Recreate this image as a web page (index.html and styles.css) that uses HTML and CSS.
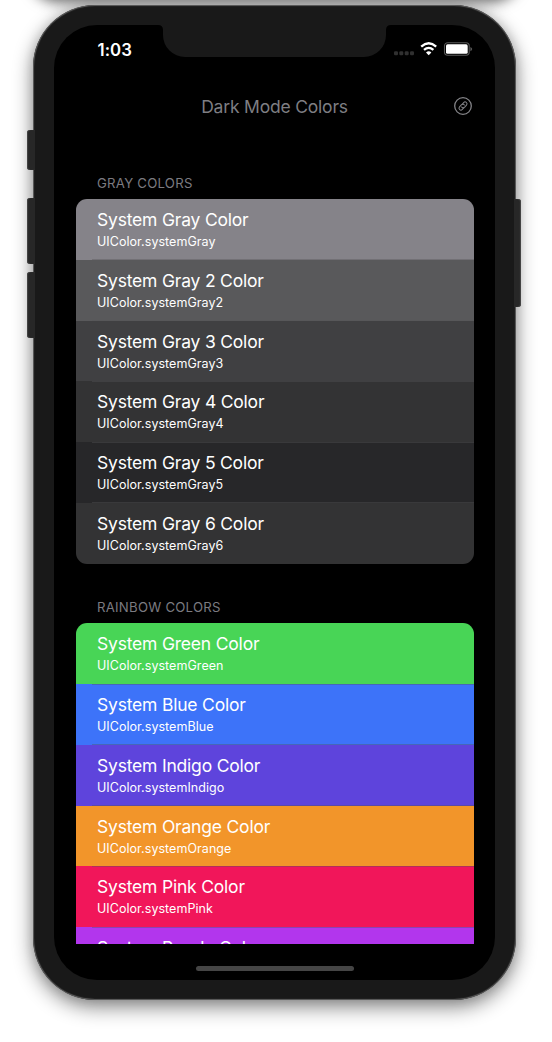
FILE: index.html
```
<!DOCTYPE html>
<html lang="en">
<head>
<meta charset="utf-8">
<title>Dark Mode Colors</title>
<link rel="stylesheet" href="styles.css">
</head>
<body>
<div class="upper-shadow"></div>
<div class="phone">
  <span class="button mute"></span>
  <span class="button volume-up"></span>
  <span class="button volume-down"></span>
  <span class="button power"></span>
  <svg class="notch" width="233" height="33" viewBox="0 0 233 33"><path d="M0 0Q5 0 5 5V10A22 22 0 0 0 27 32H206A22 22 0 0 0 228 10V5Q228 0 233 0Z"/></svg>
  <div class="screen">
    <div class="status">
      <span class="time">1:03</span>
      <svg class="indicators" width="80" height="16" viewBox="0 0 80 16">
        <g fill="#303030"><rect x="1" y="10.3" width="4" height="4" rx="1.3"/><rect x="6.3" y="10.3" width="4" height="4" rx="1.3"/><rect x="11.7" y="10.3" width="4" height="4" rx="1.3"/><rect x="17" y="10.3" width="4" height="4" rx="1.3"/></g>
        <g fill="none" stroke="#fff" stroke-width="2.3"><path d="M28.2 5.6Q35.7 -1 43.2 5.6"/><path d="M31 8.8Q35.7 4.9 40.4 8.8"/></g>
        <path fill="#fff" d="M35.7 14.2L33 11.4Q35.7 9.2 38.4 11.4Z"/>
        <rect x="51.5" y="1.8" width="24.7" height="12.5" rx="3.2" fill="none" stroke="#595959" stroke-width="1.1"/>
        <rect x="53" y="3.3" width="21.7" height="9.5" rx="1.6" fill="#fff"/>
        <path d="M77.4 5.9Q79.2 6.6 79.2 8.1T77.4 10.2Z" fill="#595959"/>
      </svg>
    </div>
    <header class="nav">
      <h1>Dark Mode Colors</h1>
      <svg class="link" width="20" height="20" viewBox="0 0 20 20" fill="none" stroke="#838387">
        <circle cx="10" cy="10" r="8.3" stroke-width="1.3"/>
        <g transform="rotate(-48 10 10)" stroke-width="1"><path d="M9.4 11.8H7A1.9 1.9 0 0 1 7 8H10A1.9 1.9 0 0 1 11.5 10.8"/><path d="M10.6 8.2H13A1.9 1.9 0 0 1 13 12H10A1.9 1.9 0 0 1 8.5 9.2"/></g>
      </svg>
    </header>
    <main class="content">
      <section>
        <h2>GRAY COLORS</h2>
        <div class="list">
          <div class="row gray"><b>System Gray Color</b><small>UIColor.systemGray</small></div>
          <div class="row gray2"><b>System Gray 2 Color</b><small>UIColor.systemGray2</small></div>
          <div class="row gray3"><b>System Gray 3 Color</b><small>UIColor.systemGray3</small></div>
          <div class="row gray4"><b>System Gray 4 Color</b><small>UIColor.systemGray4</small></div>
          <div class="row gray5"><b>System Gray 5 Color</b><small>UIColor.systemGray5</small></div>
          <div class="row gray6"><b>System Gray 6 Color</b><small>UIColor.systemGray6</small></div>
        </div>
      </section>
      <section>
        <h2>RAINBOW COLORS</h2>
        <div class="list">
          <div class="row green"><b>System Green Color</b><small>UIColor.systemGreen</small></div>
          <div class="row blue"><b>System Blue Color</b><small>UIColor.systemBlue</small></div>
          <div class="row indigo"><b>System Indigo Color</b><small>UIColor.systemIndigo</small></div>
          <div class="row orange"><b>System Orange Color</b><small>UIColor.systemOrange</small></div>
          <div class="row pink"><b>System Pink Color</b><small>UIColor.systemPink</small></div>
          <div class="row purple"><b>System Purple Color</b></div>
        </div>
      </section>
    </main>
    <div class="home"></div>
  </div>
</div>
</body>
</html>
```
FILE: styles.css
```
* { box-sizing: border-box; }
html { overflow: hidden; }
body { margin: 0; width: 552px; height: 1042px; overflow: hidden; background: #fff; position: relative; display: flow-root; font-family: Inter, "Liberation Sans", sans-serif; }
.upper-shadow { position: absolute; left: 30px; top: -61px; width: 490px; height: 56px; border-radius: 40px; box-shadow: 0 7px 14px rgba(0,0,0,.62); }
.phone { position: relative; margin: 5px 0 0 33px; width: 482.5px; height: 995px; padding: 20px 20.5px 20px 21px; background: #191919; border-radius: 62px; box-shadow: inset 0 0 1px 1px #606060, 0 7px 20px rgba(0,0,0,.48), 0 0 12px rgba(0,0,0,.12); }
.button { position: absolute; left: -6px; width: 8px; background: #272727; border-radius: 3px 0 0 3px; box-shadow: inset 1px 0 1px #484848; }
.mute { top: 125px; height: 40px; }
.volume-up { top: 192.5px; height: 66.5px; }
.volume-down { top: 267px; height: 66px; }
.power { left: 481px; top: 194px; height: 108px; width: 7px; border-radius: 0 3px 3px 0; box-shadow: inset -1px 0 1px #484848; }
.notch { position: absolute; left: 125px; top: 20px; fill: #191919; z-index: 1; }
.screen { height: 955px; background: #000; border-radius: 43px; display: flex; flex-direction: column; overflow: hidden; }
.status { height: 48px; flex: none; padding: 16px 22px 0 43.5px; display: flex; justify-content: space-between; align-items: flex-start; color: #fff; }
.time { padding-top: .6px; font-size: 16.8px; font-weight: 600; line-height: 17px; letter-spacing: .05px; }
.nav { height: 68px; flex: none; padding-right: 22px; display: grid; grid-template-columns: 42px 1fr 20px; align-items: start; }
.nav h1 { grid-column: 2; margin: 0; padding-top: 24px; font-size: 17.5px; line-height: 20px; font-weight: 400; letter-spacing: -.2px; color: #7e7e83; text-align: center; white-space: nowrap; }
.link { margin-top: 22.5px; }
.content { height: 802.5px; flex: none; padding: 32px 21.5px 0; overflow: hidden; }
h2 { margin: 0 0 5px; padding: 0 21.5px; height: 21px; font-size: 13.2px; line-height: 21px; font-weight: 400; letter-spacing: .24px; color: #7b7b80; }
section + section { margin-top: 33.9px; }
.list { border-radius: 11px; overflow: hidden; color: #fff; }
.row { height: 60.75px; padding: 11px 21.5px 0; position: relative; white-space: nowrap; }
.row + .row::before { content: ""; position: absolute; left: 16px; right: 0; top: -.5px; height: 1px; background: rgba(84,84,88,.4); }
.row b { display: block; font-size: 17.5px; line-height: 20px; font-weight: 400; letter-spacing: -.2px; }
.row small { display: block; margin-top: 4px; font-size: 12.5px; line-height: 15px; letter-spacing: .05px; }
.gray { background: #858389; }
.gray2 { background: #59595b; }
.gray3 { background: #404042; }
.gray4 { background: #333334; }
.gray5 { background: #272729; }
.gray6 { background: #333334; }
.green { background: #48d556; }
.blue { background: #3d73f9; }
.indigo { background: #5e44dc; }
.orange { background: #f2952a; }
.pink { background: #f1165a; }
.purple { background: #b236ed; }
.home { width: 158px; height: 5px; flex: none; margin: 22.5px auto 0; border-radius: 3px; background: #454545; }
```
